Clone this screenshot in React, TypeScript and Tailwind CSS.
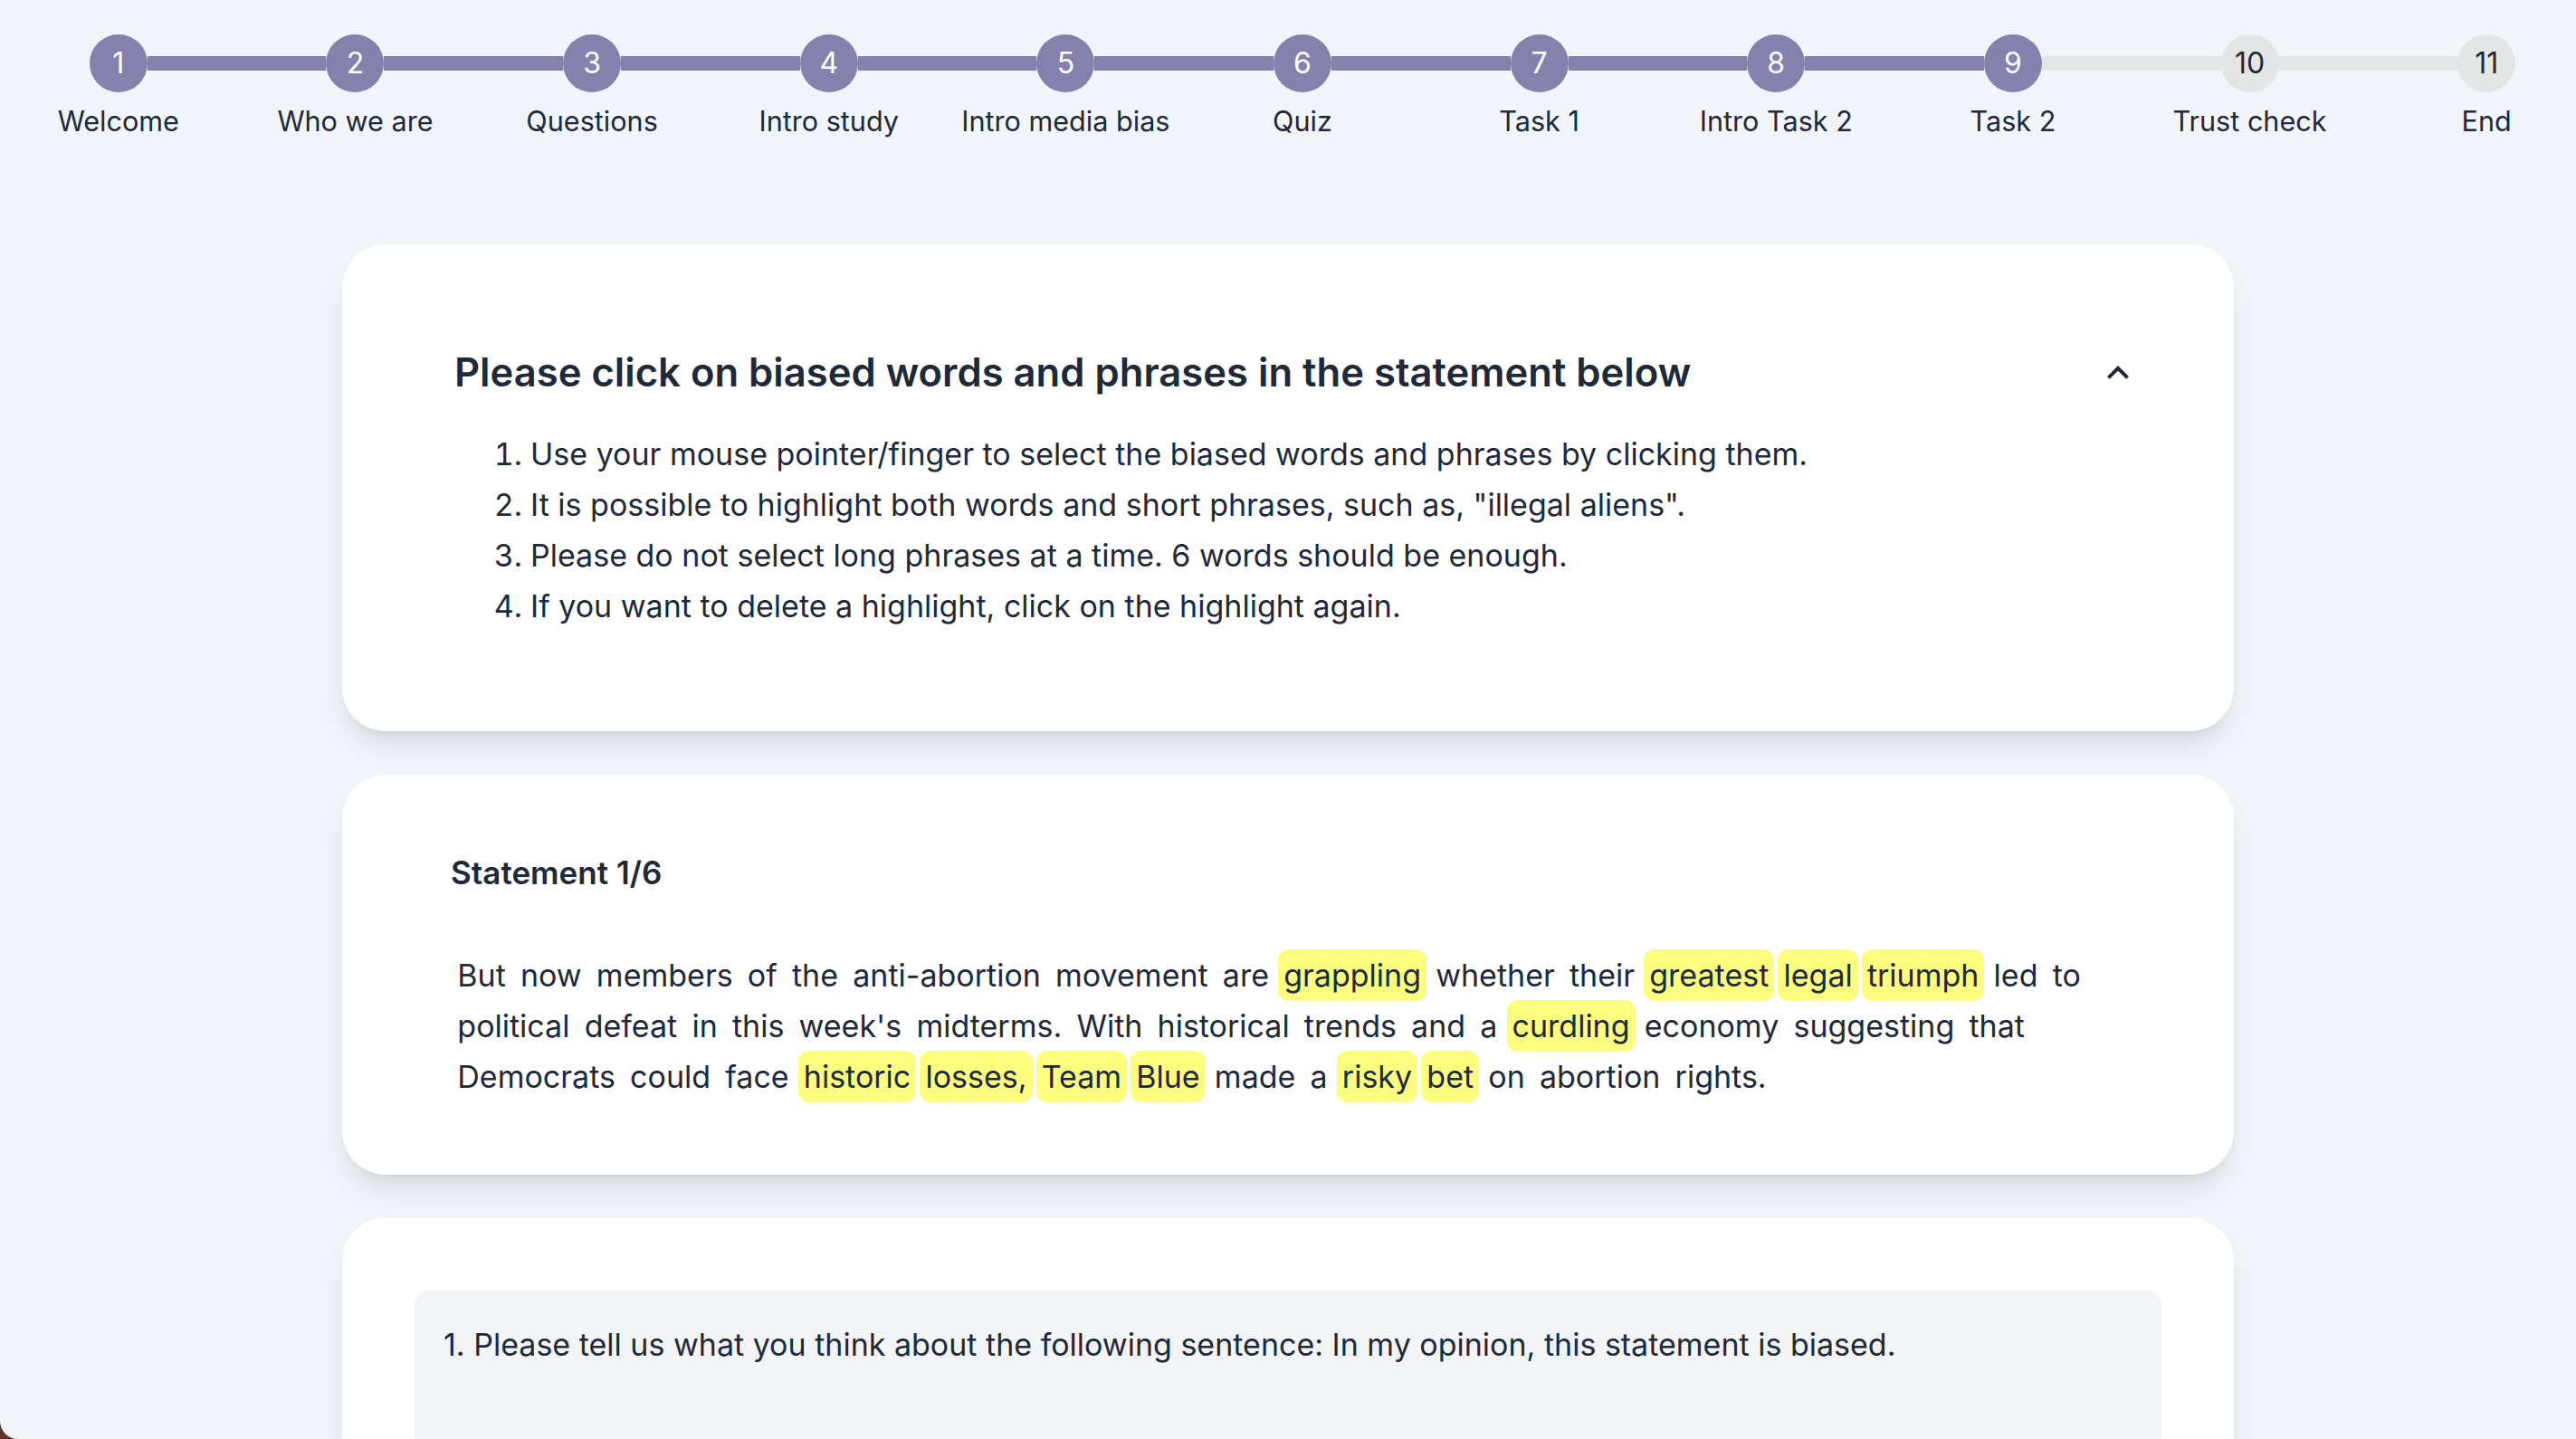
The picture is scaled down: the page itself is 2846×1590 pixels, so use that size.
import { Fragment } from 'react';

const steps = [
  'Welcome',
  'Who we are',
  'Questions',
  'Intro study',
  'Intro media bias',
  'Quiz',
  'Task 1',
  'Intro Task 2',
  'Task 2',
  'Trust check',
  'End',
];

const activeStep = 9;

const instructions = [
  'Use your mouse pointer/finger to select the biased words and phrases by clicking them.',
  'It is possible to highlight both words and short phrases, such as, "illegal aliens".',
  'Please do not select long phrases at a time. 6 words should be enough.',
  'If you want to delete a highlight, click on the highlight again.',
];

// words marked with * are highlighted
const statement =
  "But now members of the anti-abortion movement are grappling* whether their greatest* legal* triumph* led to political defeat in this week's midterms. With historical trends and a curdling* economy suggesting that Democrats could face historic* losses,* Team* Blue* made a risky* bet* on abortion rights.";

function Stepper() {
  return (
    <div className="grid w-[1439px] grid-cols-11 pt-[19px]">
      {steps.map((label, i) => {
        const n = i + 1;
        const done = n <= activeStep;
        const leftOn = n <= activeStep;
        const rightOn = n + 1 <= activeStep;
        return (
          <div key={label} className="flex flex-col items-center">
            <div className="flex w-full items-center">
              <div
                className={`h-2 flex-1 ${i === 0 ? 'bg-transparent' : leftOn ? 'bg-[#8482ad]' : 'bg-[#e4e5e5]'}`}
              />
              <div
                className={`flex h-8 w-8 items-center justify-center rounded-full text-base ${
                  done ? 'bg-[#8482ad] text-white' : 'bg-[#e4e5e5] text-gray-800'
                }`}
              >
                {n}
              </div>
              <div
                className={`h-2 flex-1 ${n === steps.length ? 'bg-transparent' : rightOn ? 'bg-[#8482ad]' : 'bg-[#e4e5e5]'}`}
              />
            </div>
            <span className="mt-1 text-[15.3px] leading-6 whitespace-nowrap">{label}</span>
          </div>
        );
      })}
    </div>
  );
}

function InstructionsCard() {
  return (
    <div className="w-[1045px] rounded-3xl bg-white pt-[55px] pr-[52px] pb-[55px] pl-[60px] shadow-lg">
      <div className="flex items-center justify-between">
        <h2 className="pl-0.5 text-[21.8px] leading-8 font-semibold">
          Please click on biased words and phrases in the statement below
        </h2>
        <svg viewBox="0 0 24 24" className="h-6 w-6 fill-current text-gray-800">
          <path d="M12 8l-6 6 1.41 1.41L12 10.83l4.59 4.58L18 14z" />
        </svg>
      </div>
      <ol className="mt-[15px] list-decimal pl-[44px] text-[17px] leading-7">
        {instructions.map((t) => (
          <li key={t}>{t}</li>
        ))}
      </ol>
    </div>
  );
}

function StatementCard() {
  const words = statement.split(' ');
  return (
    <div className="w-[1045px] rounded-3xl bg-white px-[60px] py-10 shadow-lg">
      <h3 className="text-[17.5px] leading-7 font-semibold">Statement 1/6</h3>
      <p className="mt-[29px] pl-0.5 text-[17px] leading-7">
        {words.map((raw, i) => {
          const hl = raw.endsWith('*');
          const w = hl ? raw.slice(0, -1) : raw;
          return (
            <Fragment key={i}>
              <span
                className={`-mx-[1.35px] cursor-pointer rounded-md px-[3px] py-1 ${hl ? 'bg-[#fdfd7f]' : ''}`}
              >
                {w}
              </span>
              {i < words.length - 1 && ' '}
            </Fragment>
          );
        })}
      </p>
    </div>
  );
}

function QuestionCard() {
  return (
    <div className="w-[1045px] rounded-3xl bg-white p-10 shadow-lg">
      <div className="h-40 rounded-lg bg-gray-100 p-4">
        <p className="text-[17px] leading-7">
          1. Please tell us what you think about the following sentence: In my opinion, this
          statement is biased.
        </p>
      </div>
    </div>
  );
}

export default function App() {
  return (
    <div className="h-screen overflow-hidden bg-[#5a3527]">
      <div className="h-full overflow-hidden rounded-bl-[20px] bg-[#f1f4f9] font-['Inter',sans-serif] text-gray-800">
        <div className="[zoom:2]">
          <Stepper />
          <main className="mt-[56px] flex flex-col items-center gap-6">
            <InstructionsCard />
            <StatementCard />
            <QuestionCard />
          </main>
        </div>
      </div>
    </div>
  );
}
